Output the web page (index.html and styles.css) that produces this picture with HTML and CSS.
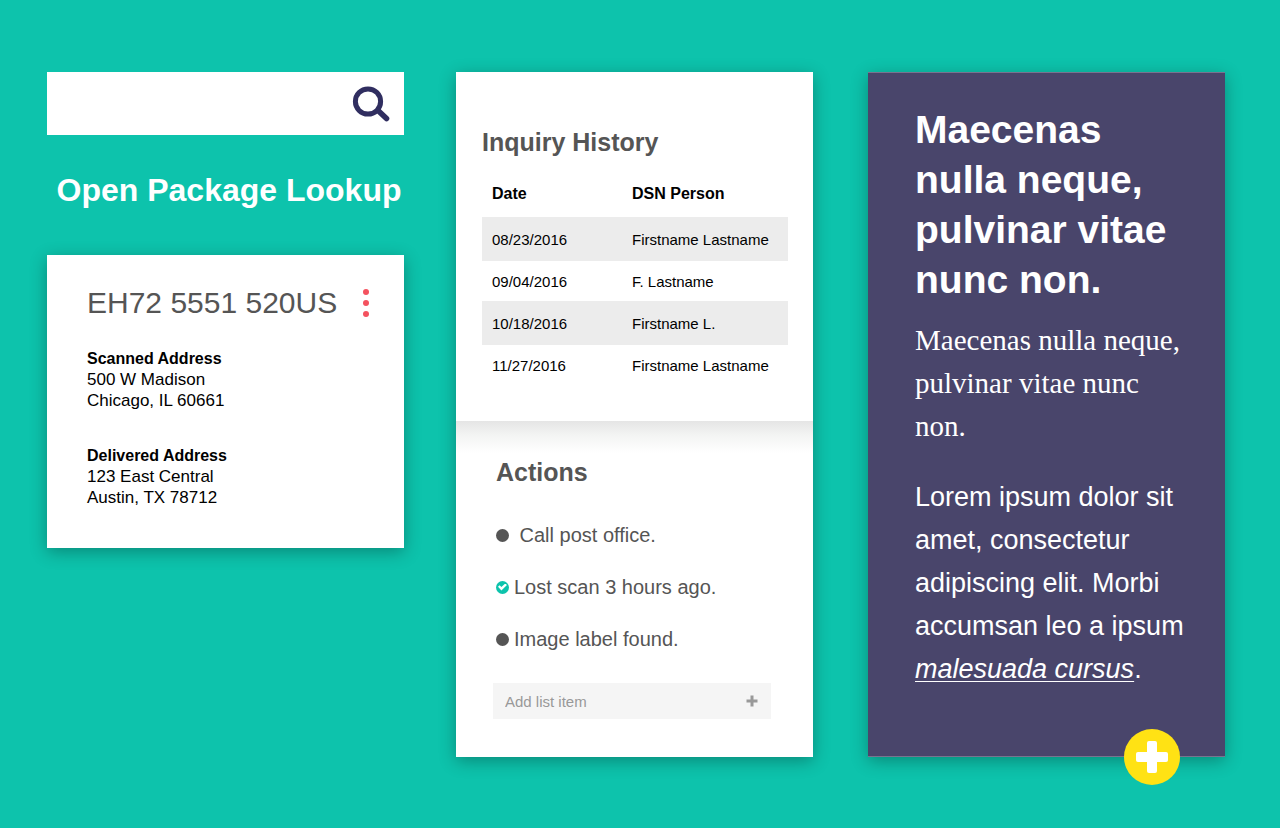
FILE: index.html
```html
<!DOCTYPE html>
<html lang="en">
<head>
<meta charset="utf-8">
<meta name="viewport" content="width=device-width, initial-scale=1">
<title>Open Package Lookup</title>
<link rel="stylesheet" href="styles.css">
</head>
<body>
<main class="board">
  <div class="column">
    <form class="search" role="search">
      <input class="search-input" type="search" aria-label="Search packages">
      <button class="search-button" type="button" aria-label="Search">
        <svg width="38" height="36" viewBox="0 0 38 36" fill="none" stroke="#302e60" stroke-linecap="round">
          <circle cx="16" cy="15.500" r="12.600" stroke-width="5"/>
          <path d="M26 24.500 34.500 32.500" stroke-width="5.600"/>
        </svg>
      </button>
    </form>
    <h1 class="page-title">Open Package Lookup</h1>
    <section class="card package">
      <header class="package-header">
        <h2 class="package-number">EH72 5551 520US</h2>
        <button class="menu-button" type="button" aria-label="More options">
          <svg width="8" height="30" viewBox="0 0 8 30" fill="#f4525f">
            <circle cx="4" cy="4" r="3"/><circle cx="4" cy="15" r="3"/><circle cx="4" cy="26" r="3"/>
          </svg>
        </button>
      </header>
      <div class="address">
        <h3 class="address-title">Scanned Address</h3>
        <p>500 W Madison</p>
        <p>Chicago, IL 60661</p>
      </div>
      <div class="address">
        <h3 class="address-title">Delivered Address</h3>
        <p>123 East Central</p>
        <p>Austin, TX 78712</p>
      </div>
    </section>
  </div>

  <div class="card column details">
    <section class="history">
      <h2 class="section-title">Inquiry History</h2>
      <table class="history-table">
        <thead>
          <tr><th scope="col">Date</th><th scope="col">DSN Person</th></tr>
        </thead>
        <tbody>
          <tr><td>08/23/2016</td><td>Firstname Lastname</td></tr>
          <tr><td>09/04/2016</td><td>F. Lastname</td></tr>
          <tr><td>10/18/2016</td><td>Firstname L.</td></tr>
          <tr><td>11/27/2016</td><td>Firstname Lastname</td></tr>
        </tbody>
      </table>
    </section>
    <section class="actions">
      <h2 class="section-title actions-title">Actions</h2>
      <ul class="action-list">
        <li class="action"><input class="action-check" type="checkbox" id="action-call"><label for="action-call">&nbsp;Call post office.</label></li>
        <li class="action"><input class="action-check" type="checkbox" id="action-scan" checked><label for="action-scan">Lost scan 3 hours ago.</label></li>
        <li class="action"><input class="action-check" type="checkbox" id="action-label"><label for="action-label">Image label found.</label></li>
      </ul>
      <form class="add-item">
        <input class="add-input" type="text" placeholder="Add list item" aria-label="Add list item">
        <button class="add-button" type="button" aria-label="Add">
          <svg width="12" height="12" viewBox="0 0 12 12" fill="#999"><path d="M4.500 .5h3v4h4v3h-4v4h-3v-4h-4v-3h4z"/></svg>
        </button>
      </form>
    </section>
  </div>

  <article class="card column note">
    <h2 class="note-title">Maecenas nulla neque, pulvinar vitae nunc non.</h2>
    <p class="note-lead">Maecenas nulla neque, pulvinar vitae nunc non.</p>
    <p class="note-body">Lorem ipsum dolor sit amet, consectetur adipiscing elit. Morbi accumsan leo a ipsum <a class="note-link" href="#">malesuada cursus</a>.</p>
    <button class="note-add" type="button" aria-label="Add note">
      <svg width="32" height="32" viewBox="0 0 32 32" fill="#fff">
        <rect x="11" y="0" width="10" height="32" rx="2"/><rect x="0" y="11" width="32" height="10" rx="2"/>
      </svg>
    </button>
  </article>
</main>
</body>
</html>
```
FILE: styles.css
```css
* {
  box-sizing: border-box;
}

body {
  margin: 0;
  min-height: 100vh;
  background: #0dc3ac;
  color: #000;
  font-family: "Liberation Sans", Arial, sans-serif;
  font-size: 15px;
}

h1, h2, h3, p, ul {
  margin: 0;
  padding: 0;
}

button {
  display: flex;
  align-items: center;
  justify-content: center;
  padding: 0;
  border: 0;
  background: none;
  cursor: pointer;
}

input {
  margin: 0;
  border: 0;
  border-radius: 0;
  background: none;
  font-family: inherit;
}

.board {
  display: grid;
  grid-template-columns: minmax(0, 1fr) 52px minmax(0, 1fr) 55px minmax(0, 1fr);
  align-items: start;
  padding: 72px 55px 71px 47px;
}

.column:nth-child(2) {
  grid-column: 3;
}

.column:nth-child(3) {
  grid-column: 5;
}

.card {
  background: #fff;
  box-shadow: 0 4px 16px rgba(0, 0, 0, 0.3);
}

/* Search and package card */

.search {
  display: flex;
  height: 63px;
  background: #fff;
}

.search-input {
  flex: 1;
  min-width: 0;
  padding: 0 20px;
  font-size: 20px;
}

.search-button {
  width: 66px;
}

.page-title {
  margin: 37px 0 47px;
  padding-left: 7px;
  color: #fff;
  font-size: 32px;
  line-height: 36px;
  text-align: center;
}

.package {
  padding: 30px 34px 40px 40px;
}

.package-header {
  display: flex;
  align-items: center;
  justify-content: space-between;
}

.package-number {
  color: #555;
  font-size: 30px;
  font-weight: 400;
  line-height: 36px;
}

.address {
  margin-top: 34px;
  font-size: 17px;
  line-height: 21px;
}

.package-header + .address {
  margin-top: 27px;
}

.address-title {
  font-size: 16px;
  line-height: 21px;
}

/* Inquiry history */

.history {
  padding: 55px 25px 36px 26px;
}

.section-title {
  color: #555;
  font-size: 25px;
  line-height: 30px;
}

.history-table {
  width: 100%;
  margin-top: 14px;
  border-collapse: collapse;
  table-layout: fixed;
}

.history-table th,
.history-table td {
  height: 40px;
  padding: 0 0 0 10px;
  text-align: left;
}

.history-table th {
  height: 46px;
  font-size: 16px;
}

.history-table th:first-child {
  width: 140px;
}

.history-table tbody tr:nth-child(odd) {
  background: #ececec;
}

.history-table tbody tr:nth-child(odd) td {
  height: 44px;
}

/* Actions */

.actions {
  padding: 36px 42px 38px 37px;
  background: linear-gradient(#e5e5e5, #f3f4f3 14px, #fff 32px);
  color: #555;
}

.actions-title {
  padding-left: 3px;
}

.action-list {
  display: grid;
  gap: 28px;
  margin: 36px 0 32px;
  padding-left: 3px;
  list-style: none;
}

.action {
  display: flex;
  align-items: center;
  gap: 5px;
  font-size: 20px;
  line-height: 24px;
}

.action-check {
  display: grid;
  place-items: center;
  flex: none;
  width: 13px;
  height: 13px;
  border-radius: 50%;
  background: #555;
  appearance: none;
}

.action-check:checked {
  background: #0dc3ac;
}

.action-check:checked::after {
  content: "";
  width: 9px;
  height: 7px;
  background: #fff;
  clip-path: polygon(0 45%, 18% 25%, 38% 50%, 80% 0, 100% 22%, 38% 100%);
}

.add-item {
  display: flex;
  height: 36px;
  background: #f5f5f5;
}

.add-input {
  flex: 1;
  min-width: 0;
  padding: 0 12px;
  font-size: 15px;
}

.add-input::placeholder {
  color: #999;
}

.add-button {
  width: 38px;
}

/* Note */

.note {
  position: relative;
  padding: 32px 32px 65px 47px;
  border: solid #78748f;
  border-width: 1px 0;
  background: #49456b;
  color: #fff;
}

.note-title {
  font-size: 39px;
  line-height: 50px;
}

.note-lead {
  margin: 14px 0 28px;
  font-family: "Liberation Serif", "Times New Roman", serif;
  font-size: 29px;
  line-height: 43px;
}

.note-body {
  font-size: 27px;
  line-height: 43px;
}

.note-link {
  color: inherit;
  font-style: italic;
  text-decoration-thickness: 1px;
  text-decoration-skip-ink: none;
  text-underline-offset: 3px;
}

.note-add {
  position: absolute;
  right: 45px;
  bottom: -29px;
  width: 56px;
  height: 56px;
  border-radius: 50%;
  background: #ffe214;
}
```
